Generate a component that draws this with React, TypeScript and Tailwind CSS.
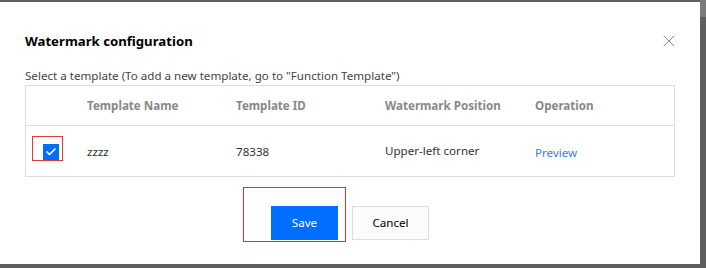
import { Check, X } from 'lucide-react';

export default function App() {
  const cols = 'grid grid-cols-[61px_149px_149px_150px_1fr] items-center';

  return (
    <div className="w-[706px] h-[268px] bg-[#5f5f5f] pt-[2px] relative overflow-hidden font-['Noto_Sans',sans-serif]">
      <div className="absolute right-0 top-0 w-[6px] h-[17px] bg-[#7a7a7a]" />
      <div className="w-[700px] h-[262px] bg-white relative pt-[29px] px-[25px]">
        <div className="flex items-center justify-between">
          <h2 className="text-[13.2px] leading-[20px] font-bold text-black">Watermark configuration</h2>
          <X className="w-[20px] h-[20px] text-[#8a8a8a] mr-[-4px]" strokeWidth={1.2} />
        </div>

        <p className="mt-[17px] text-[11.6px] leading-[16px] text-[#444]">
          Select a template (To add a new template, go to "Function Template")
        </p>

        <div className="mt-[1px] border border-[#dddddd]">
          <div className={`${cols} h-[40px] border-b border-[#dddddd] text-[11.6px] font-bold text-[#888]`}>
            <div />
            <div>Template Name</div>
            <div>Template ID</div>
            <div>Watermark Position</div>
            <div>Operation</div>
          </div>
          <div className={`${cols} h-[50px] text-[11.6px] text-[#333]`}>
            <div className="relative pl-[17px]">
              <div className="w-[16px] h-[16px] bg-[#006eff] flex items-center justify-center mt-[2px]">
                <Check className="w-[12px] h-[12px] text-white" strokeWidth={3.5} />
              </div>
              {/* annotation box */}
              <div className="absolute left-[6px] top-[-6px] w-[31px] h-[25px] border border-[#e53935]" />
            </div>
            <div className="mt-[2px]">zzzz</div>
            <div className="mt-[2px]">78338</div>
            <div>Upper-left corner</div>
            <div className="mt-[4px] text-[#3a7cf0]">Preview</div>
          </div>
        </div>

        <div className="mt-[29px] flex justify-center gap-[14px]">
          <div className="relative">
            <button className="w-[67px] h-[34px] bg-[#006eff] text-white text-[11.6px]">Save</button>
            {/* annotation box */}
            <div className="absolute left-[-28px] top-[-19px] w-[103px] h-[55px] border border-[#ee2b2b] pointer-events-none" />
          </div>
          <button className="w-[77px] h-[34px] bg-[#fbfbfb] border border-[#dddddd] text-[11.6px] text-black">Cancel</button>
        </div>
      </div>
    </div>
  );
}
